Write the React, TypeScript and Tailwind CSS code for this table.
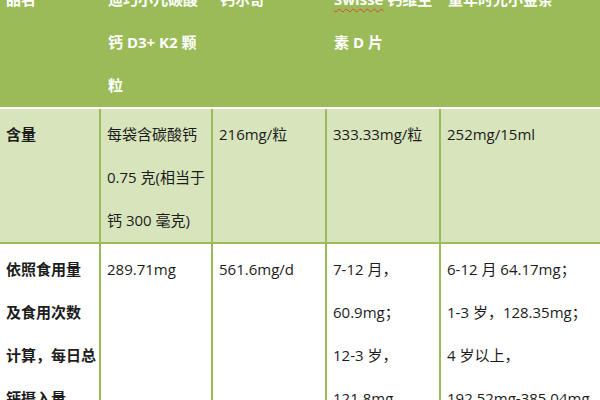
import React from 'react';

// Calcium supplement comparison table (scrolled view)
const font = { fontFamily: '"Open Sans", "Noto Sans CJK SC", sans-serif' };

const cols = ['w-[99px]', 'w-[112px]', 'w-[114px]', 'w-[114px]', 'w-[161px]'];

const Lines = ({ lines }: { lines: React.ReactNode[] }) => (
    <>
        {lines.map((l, i) => (
            <div key={i} className="whitespace-nowrap">{l}</div>
        ))}
    </>
);

const App = () => {
    const header: React.ReactNode[][] = [
        ['品名'],
        ['迪巧小儿碳酸', '钙 D3+ K2 颗', '粒'],
        ['钙尔奇'],
        [
            <span key="s">
                <span className="underline decoration-wavy decoration-[#d9452f] decoration-1 underline-offset-[3px]">Swisse</span> 钙维生
            </span>,
            '素 D 片',
        ],
        ['童年时光小金条'],
    ];

    const rows: { bg: string; cells: React.ReactNode[][] }[] = [
        {
            bg: 'bg-[#d8e4bc]',
            cells: [
                ['含量'],
                ['每袋含碳酸钙', '0.75 克(相当于', '钙 300 毫克)'],
                ['216mg/粒'],
                ['333.33mg/粒'],
                ['252mg/15ml'],
            ],
        },
        {
            bg: 'bg-white',
            cells: [
                ['依照食用量', '及食用次数', '计算，每日总', '钙摄入量'],
                ['289.71mg'],
                ['561.6mg/d'],
                ['7-12 月，', '60.9mg；', '12-3 岁，', '121.8mg'],
                ['6-12 月 64.17mg；', '1-3 岁，128.35mg；', '4 岁以上，', '192.52mg-385.04mg'],
            ],
        },
    ];

    return (
        <div className="w-[600px] h-[400px] overflow-hidden bg-white" style={font}>
            <div className="w-[640px] -mt-[26px] text-[15px] leading-[43px]">
                {/* Header */}
                <div className="flex bg-[#9bbb59] border-b-2 border-white text-white font-bold">
                    {header.map((c, i) => (
                        <div key={i} className={`${cols[i]} shrink-0 pt-[4px] ${i === 0 ? 'pl-[6px]' : 'pl-[7px] border-l-2 border-[#9bbb59]'}`}>
                            <Lines lines={c} />
                        </div>
                    ))}
                </div>

                {/* Body */}
                {rows.map((r, ri) => (
                    <div key={ri} className={`flex ${r.bg} border-b-2 border-[#9bbb59] text-[#1c1c1c]`}>
                        {r.cells.map((c, i) => (
                            <div
                                key={i}
                                className={`${cols[i]} shrink-0 pt-[4px] ${i === 0 ? 'pl-[6px] font-bold' : 'pl-[6px] border-l-2 border-[#9bbb59]'}`}
                            >
                                <Lines lines={c} />
                            </div>
                        ))}
                    </div>
                ))}
            </div>
        </div>
    );
};

export default App;
